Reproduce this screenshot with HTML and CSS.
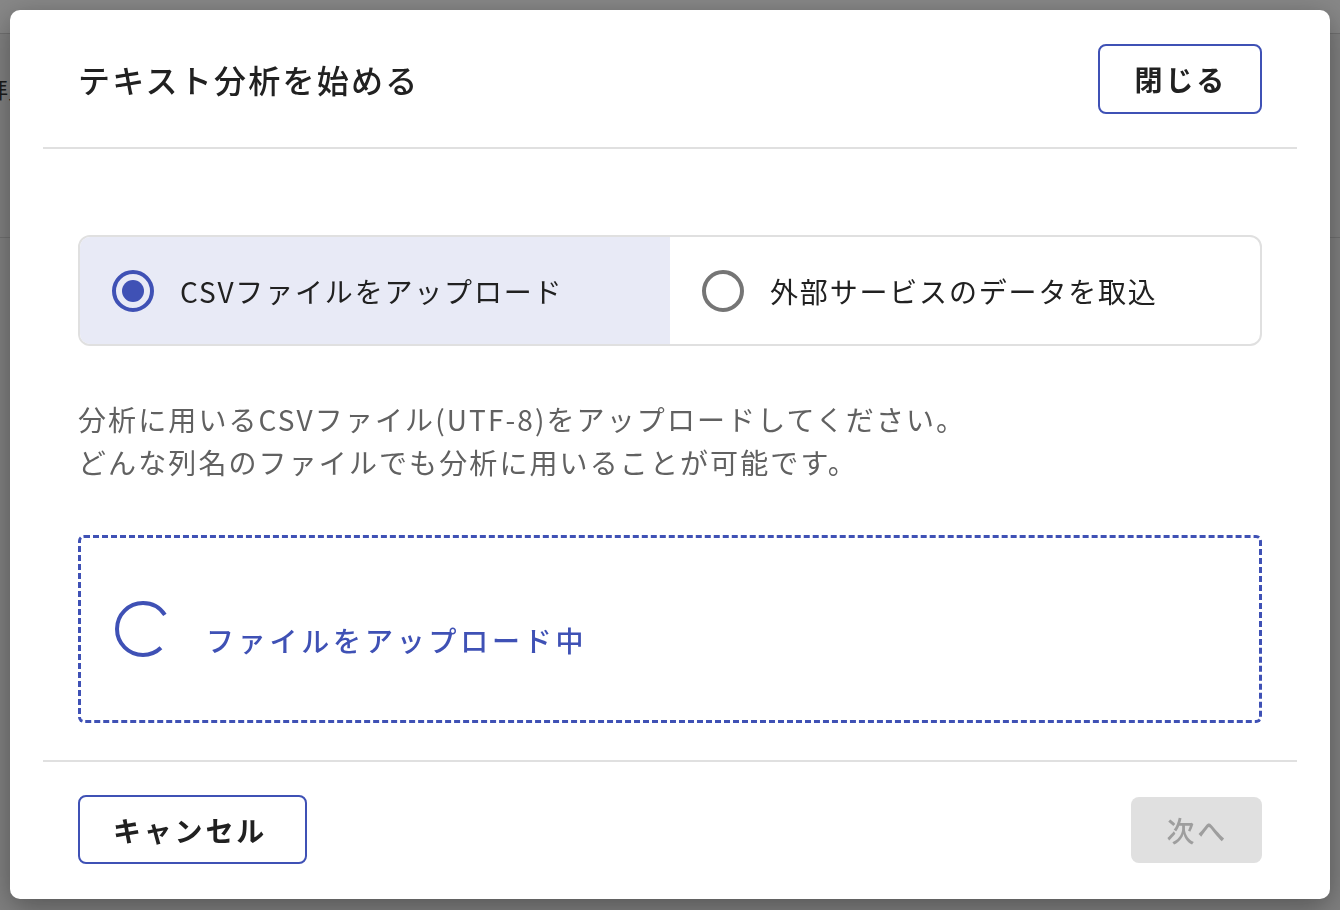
FILE: index.html
```html
<!DOCTYPE html>
<html lang="ja">

<head>
    <meta charset="UTF-8">
    <meta name="viewport" content="width=device-width, initial-scale=1.0">
    <title>テキスト分析を始める</title>
    <link rel="stylesheet" href="styles.css">
</head>

<body>
    <div class="page">
        <div class="page-header"></div>
        <div class="page-toolbar">
            <span class="page-tab">拝見</span>
        </div>
        <div class="page-content"></div>
    </div>

    <div class="overlay">
        <div class="dialog">
            <div class="dialog-header">
                <h2 class="dialog-title">テキスト分析を始める</h2>
                <button class="btn btn-outline">閉じる</button>
            </div>

            <div class="dialog-body">
                <div class="source-toggle">
                    <label class="source-option selected">
                        <span class="radio"></span>
                        CSVファイルをアップロード
                    </label>
                    <label class="source-option">
                        <span class="radio"></span>
                        外部サービスのデータを取込
                    </label>
                </div>

                <p class="description">
                    分析に用いるCSVファイル(UTF-8)をアップロードしてください。<br>
                    どんな列名のファイルでも分析に用いることが可能です。
                </p>

                <div class="dropzone">
                    <svg class="spinner" viewBox="0 0 56 56">
                        <circle cx="28" cy="28" r="26" fill="none" stroke="#3f51b5" stroke-width="4"
                            stroke-dasharray="126.6 36.8" stroke-dashoffset="-20.9"></circle>
                    </svg>
                    <span class="dropzone-text">ファイルをアップロード中</span>
                </div>
            </div>

            <div class="dialog-footer">
                <button class="btn btn-outline">キャンセル</button>
                <button class="btn btn-disabled" disabled>次へ</button>
            </div>
        </div>
    </div>
</body>

</html>
```

FILE: styles.css
```css
* {
    box-sizing: border-box;
}

body {
    margin: 0;
    background-color: #f2f2f2;
    font-family: "Noto Sans CJK JP", "Noto Sans", sans-serif;
    color: #212121;
}

/* page behind the dialog */
.page-header {
    height: 34px;
    background-color: #ffffff;
    border-bottom: 1px solid #d4d4d4;
}

.page-toolbar {
    height: 204px;
    border-bottom: 1px solid #d4d4d4;
    padding-top: 38px;
}

.page-tab {
    margin-left: -14px;
    font-size: 22px;
    color: #333;
}

.overlay {
    position: fixed;
    inset: 0;
    background-color: rgba(0, 0, 0, 0.47);
    display: flex;
    justify-content: center;
    align-items: flex-start;
    padding-top: 10px;
}

.dialog {
    width: 1320px;
    background-color: #fff;
    border-radius: 10px;
    padding: 0 33px;
    box-shadow: 0 8px 30px rgba(0, 0, 0, 0.35);
}

.dialog-header {
    display: flex;
    justify-content: space-between;
    align-items: center;
    padding: 34px 35px 33px;
    border-bottom: 2px solid #e0e0e0;
}

.dialog-title {
    margin: 0;
    font-size: 32px;
    font-weight: 500;
    letter-spacing: 0.07em;
}

.btn {
    font-family: inherit;
    font-size: 28px;
    font-weight: 700;
    letter-spacing: 0.1em;
    border-radius: 8px;
    cursor: pointer;
    background-color: #fff;
    color: #212121;
}

.btn-outline {
    height: 70px;
    padding: 0 33px 0 35px;
    border: 2px solid #3f51b5;
}

.dialog-footer .btn-outline {
    height: 69px;
    padding: 0 38px 0 33px;
}

.btn-disabled {
    height: 66px;
    padding: 0 34px 0 35px;
    border: none;
    background-color: #e0e0e0;
    color: #9e9e9e;
    font-weight: 500;
    cursor: default;
}

.dialog-body {
    padding: 86px 35px 37px;
}

.source-toggle {
    display: flex;
    height: 111px;
    border: 2px solid #e0e0e0;
    border-radius: 12px;
    overflow: hidden;
}

.source-option {
    flex: 1;
    display: flex;
    align-items: center;
    gap: 26px;
    padding-left: 32px;
    font-size: 28px;
    letter-spacing: 0.065em;
    cursor: pointer;
}

.source-option.selected {
    background-color: #e8eaf6;
}

.radio {
    width: 42px;
    height: 42px;
    border: 4px solid #757575;
    border-radius: 50%;
    display: flex;
    justify-content: center;
    align-items: center;
}

.selected .radio {
    border-color: #3f51b5;
}

.selected .radio::after {
    content: "";
    width: 22px;
    height: 22px;
    border-radius: 50%;
    background-color: #3f51b5;
}

.description {
    margin: 52px 0 51px;
    font-size: 28px;
    line-height: 43px;
    letter-spacing: 0.075em;
    color: #616161;
}

.dropzone {
    height: 188px;
    border: 3px dashed #3f51b5;
    border-radius: 6px;
    display: flex;
    align-items: center;
    gap: 35px;
    padding-left: 34px;
}

.spinner {
    width: 56px;
    height: 56px;
}

.dropzone-text {
    margin-top: 22px;
    font-size: 28px;
    font-weight: 500;
    letter-spacing: 0.135em;
    color: #3f51b5;
}

.dialog-footer {
    display: flex;
    justify-content: space-between;
    align-items: center;
    padding: 33px 35px 35px;
    border-top: 2px solid #e0e0e0;
}
```
